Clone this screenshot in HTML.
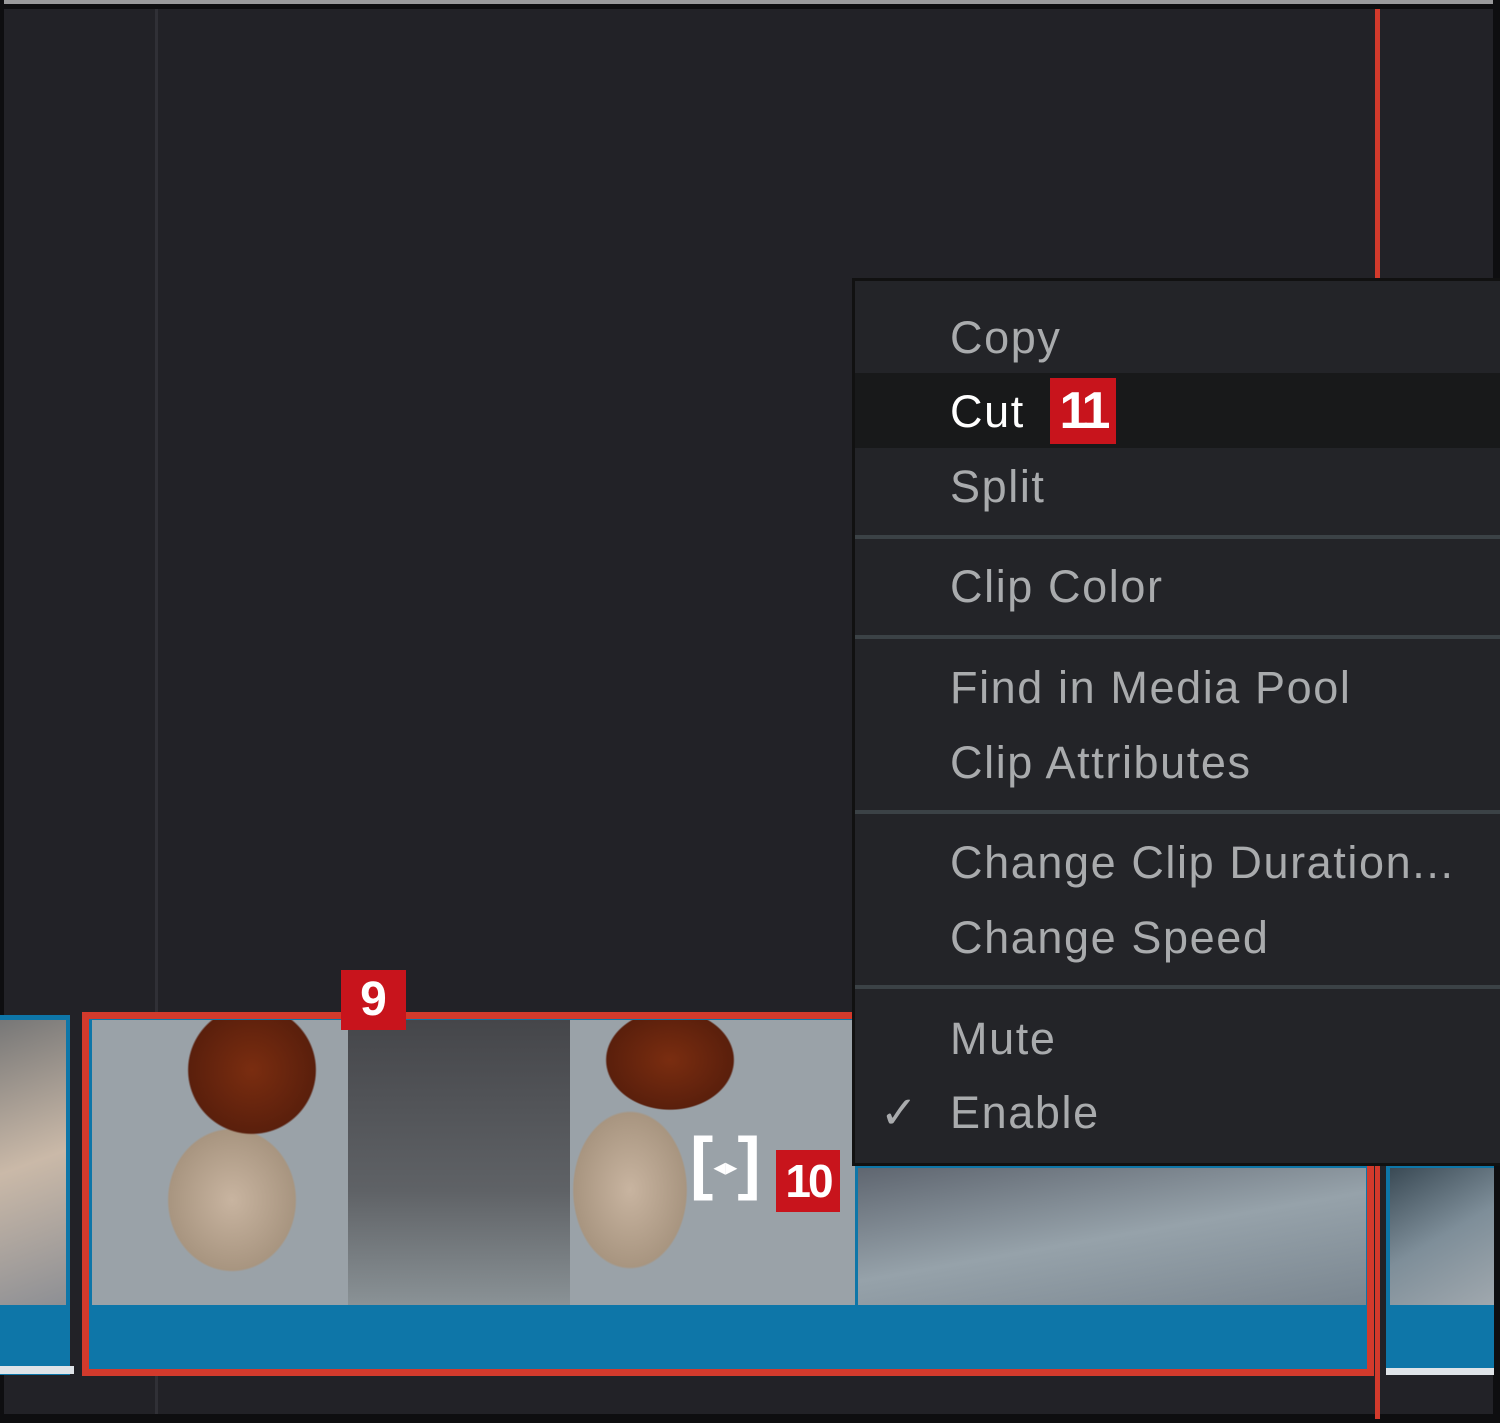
<!DOCTYPE html>
<html><head><meta charset="utf-8"><style>
*{margin:0;padding:0;box-sizing:border-box}
body{width:1500px;height:1423px;background:#222227;position:relative;overflow:hidden;font-family:"Liberation Sans","DejaVu Sans",sans-serif}
.a{position:absolute}
.menu{left:852px;top:278px;width:650px;height:888px;background:#232428;border:3px solid #111;border-right:none}
.it{position:absolute;left:95px;color:#a9abad;font-size:45px;line-height:75px;height:75px;letter-spacing:1.6px;white-space:nowrap}
.sep{position:absolute;left:0;right:0;height:4px;background:#3b4246}
.badge{position:absolute;background:#c8141c;color:#fff;font-weight:bold;text-align:center}
.th{position:absolute;top:1020px;height:285px}
</style></head><body>
<div class="a" style="left:0;top:0;width:1500px;height:4px;background:#9a9a9c"></div>
<div class="a" style="left:0;top:4px;width:1500px;height:5px;background:#0e0e10"></div>
<div class="a" style="left:0;top:0;width:4px;height:1423px;background:#0e0e10"></div>
<div class="a" style="left:1493px;top:0;width:7px;height:1423px;background:#0e0e10"></div>
<div class="a" style="left:0;top:1414px;width:1500px;height:9px;background:#0e0e10"></div>
<div class="a" style="left:155px;top:9px;width:3px;height:1405px;background:#303036"></div>
<div class="a" style="left:1375px;top:9px;width:5px;height:1410px;background:#d23a2c"></div>

<!-- clips -->
<div class="a" style="left:0;top:1015px;width:70px;height:360px;background:#0e76a8"></div>
<div class="th" style="left:0;width:66px;background:linear-gradient(160deg,#777 0%,#cab9a8 50%,#8d8f94 100%)"></div>
<div class="a" style="left:0;top:1366px;width:74px;height:8px;background:#dfe4e8"></div>
<div class="a" style="left:1386px;top:1165px;width:108px;height:210px;background:#0e76a8"></div>
<div class="a" style="left:1390px;top:1168px;width:104px;height:137px;background:linear-gradient(150deg,#3a4a55,#7e8e99 50%,#a0a8ae)"></div>
<div class="a" style="left:1386px;top:1368px;width:108px;height:7px;background:#dfe4e8"></div>

<div class="a" style="left:82px;top:1012px;width:1292px;height:364px;border:7px solid #d23a2c;background:#0e76a8"></div>
<div class="th" style="left:92px;width:256px;background:radial-gradient(ellipse 90px 90px at 160px 50px,#7a2d10 0%,#5a1f0c 70%,transparent 72%),radial-gradient(ellipse 90px 100px at 140px 180px,#c8b4a0 0%,#a89580 70%,transparent 72%),#9aa2a8"></div>
<div class="th" style="left:348px;width:222px;background:linear-gradient(180deg,#45464a,#5f6266 60%,#8a9296)"></div>
<div class="th" style="left:570px;width:285px;background:radial-gradient(ellipse 90px 70px at 100px 40px,#7a2d10 0%,#5a1f0c 70%,transparent 72%),radial-gradient(ellipse 80px 110px at 60px 170px,#c8b4a0 0%,#a89580 70%,transparent 72%),#9aa2a8"></div>
<div class="a" style="left:858px;top:1168px;width:508px;height:137px;background:linear-gradient(170deg,#5f6670,#96a2aa 50%,#7a8690)"></div>

<!-- trim icon -->
<div class="a" style="left:690px;top:1125px;width:80px;height:75px;color:#fff;font-size:70px;line-height:75px;font-weight:bold">[<span style="font-size:24px;vertical-align:middle">◂▸</span>]</div>

<div class="badge" style="left:341px;top:970px;width:65px;height:60px;font-size:48px;line-height:60px">9</div>
<div class="badge" style="left:776px;top:1150px;width:64px;height:62px;font-size:46px;line-height:62px;letter-spacing:-3px">10</div>

<!-- menu -->
<div class="a menu">
  <div class="it" style="top:19px">Copy</div>
  <div class="a" style="left:0;top:92px;width:650px;height:75px;background:#18191a"></div>
  <div class="it" style="top:93px;color:#fff">Cut</div>
  <div class="badge" style="left:195px;top:97px;width:66px;height:66px;font-size:52px;line-height:66px;letter-spacing:-4px">11</div>
  <div class="it" style="top:168px">Split</div>
  <div class="sep" style="top:254px"></div>
  <div class="it" style="top:268px">Clip Color</div>
  <div class="sep" style="top:354px"></div>
  <div class="it" style="top:369px">Find in Media Pool</div>
  <div class="it" style="top:444px">Clip Attributes</div>
  <div class="sep" style="top:529px"></div>
  <div class="it" style="top:544px">Change Clip Duration...</div>
  <div class="it" style="top:619px">Change Speed</div>
  <div class="sep" style="top:704px"></div>
  <div class="it" style="top:720px">Mute</div>
  <div class="it" style="top:794px;left:25px">✓</div>
  <div class="it" style="top:794px">Enable</div>
</div>
</body></html>
